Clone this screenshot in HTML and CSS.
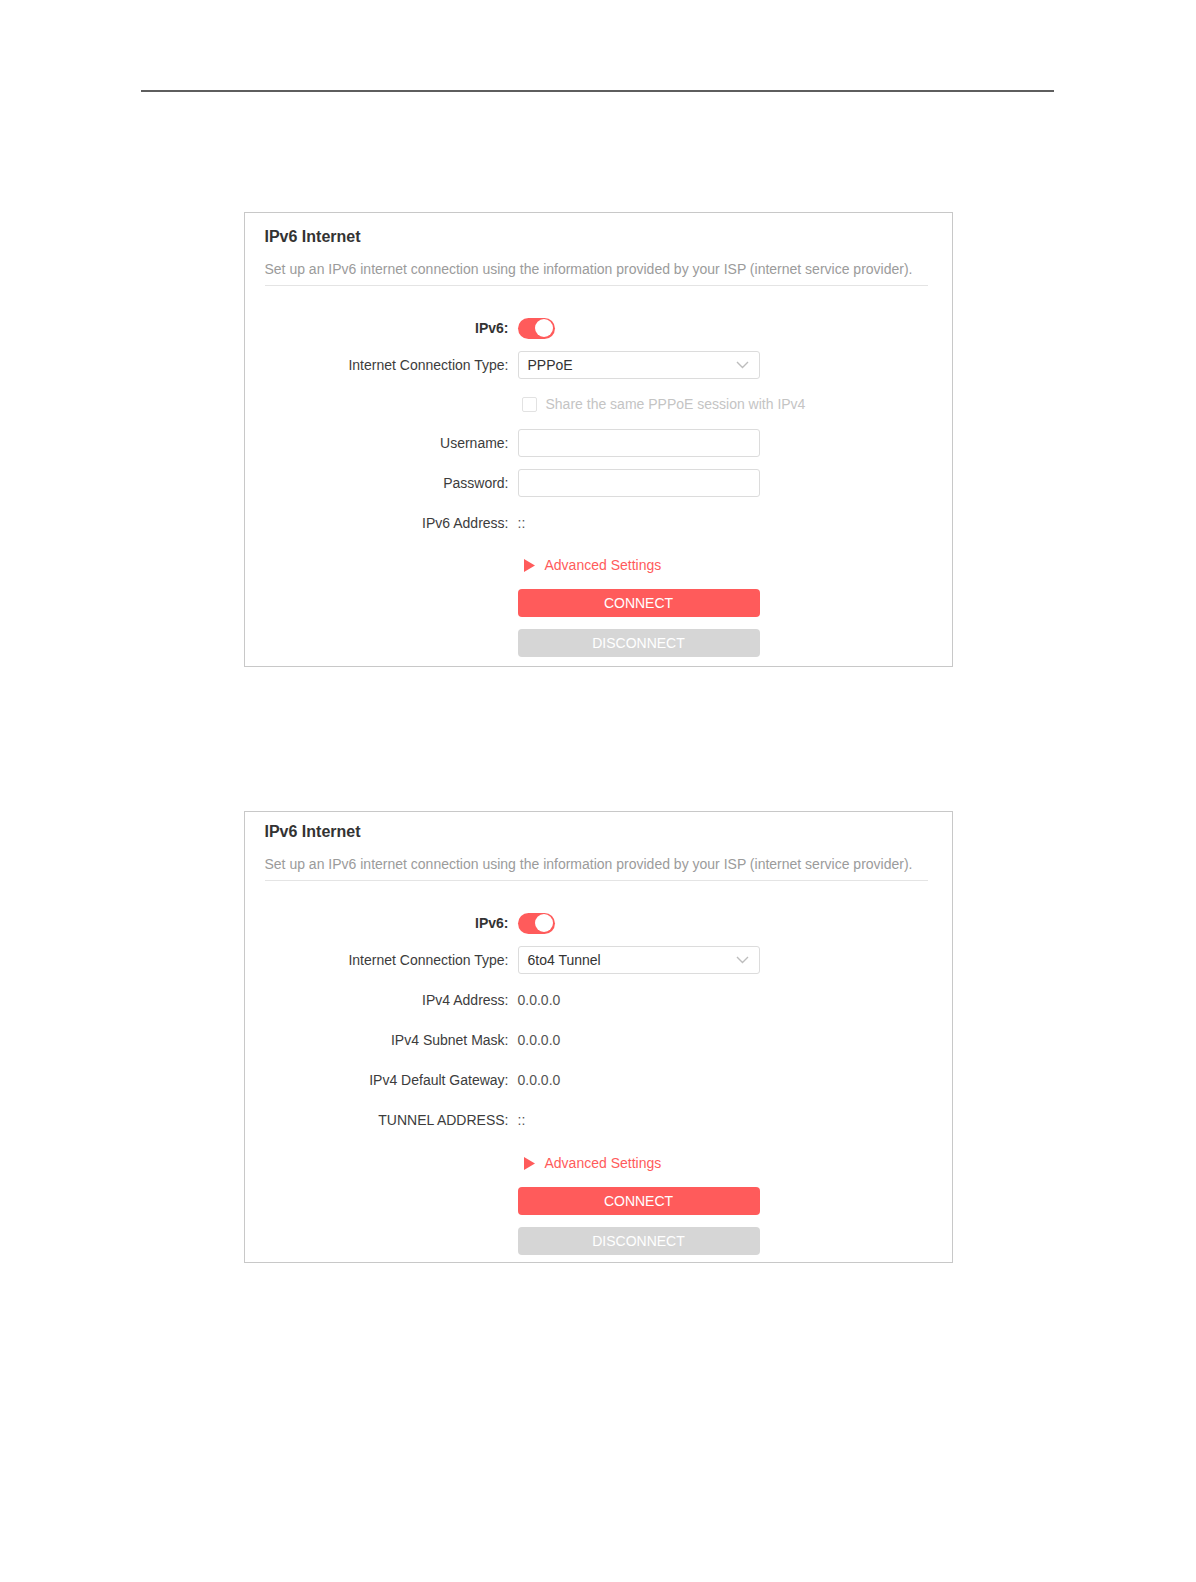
FILE: index.html
```html
<!DOCTYPE html>
<html lang="en">
<head>
<meta charset="utf-8">
<title>IPv6 Internet</title>
<link rel="stylesheet" href="styles.css">
</head>
<body>
<div class="page">
  <div class="rule"></div>

  <section class="panel">
    <h2 class="panel-title">IPv6 Internet</h2>
    <p class="panel-desc">Set up an IPv6 internet connection using the information provided by your ISP (internet service provider).</p>
    <div class="form">
      <div class="row row--switch">
        <span class="label label--strong">IPv6:</span>
        <span class="toggle"></span>
      </div>
      <div class="row">
        <span class="label">Internet Connection Type:</span>
        <div class="select">
          <span>PPPoE</span>
          <svg class="chevron" width="13" height="8" viewBox="0 0 13 8"><polyline points="1,1 6.5,6.5 12,1" fill="none" stroke="#bdbdbd" stroke-width="1.4"/></svg>
        </div>
      </div>
      <div class="row row--check">
        <span class="label"></span>
        <span class="checkbox"></span>
        <span class="check-text">Share the same PPPoE session with IPv4</span>
      </div>
      <div class="row">
        <span class="label">Username:</span>
        <span class="input"></span>
      </div>
      <div class="row">
        <span class="label">Password:</span>
        <span class="input"></span>
      </div>
      <div class="row">
        <span class="label">IPv6 Address:</span>
        <span class="value">::</span>
      </div>
      <div class="row row--adv">
        <span class="label"></span>
        <span class="advanced">
          <svg class="adv-arrow" width="11" height="13" viewBox="0 0 11 13"><polygon points="0,0 11,6.5 0,13" fill="#ff5b5b"/></svg>
          Advanced Settings
        </span>
      </div>
      <div class="row">
        <span class="label"></span>
        <span class="btn btn--primary">CONNECT</span>
      </div>
      <div class="row">
        <span class="label"></span>
        <span class="btn btn--disabled">DISCONNECT</span>
      </div>
    </div>
  </section>

  <section class="panel panel--second">
    <h2 class="panel-title">IPv6 Internet</h2>
    <p class="panel-desc">Set up an IPv6 internet connection using the information provided by your ISP (internet service provider).</p>
    <div class="form">
      <div class="row row--switch">
        <span class="label label--strong">IPv6:</span>
        <span class="toggle"></span>
      </div>
      <div class="row">
        <span class="label">Internet Connection Type:</span>
        <div class="select">
          <span>6to4 Tunnel</span>
          <svg class="chevron" width="13" height="8" viewBox="0 0 13 8"><polyline points="1,1 6.5,6.5 12,1" fill="none" stroke="#bdbdbd" stroke-width="1.4"/></svg>
        </div>
      </div>
      <div class="row">
        <span class="label">IPv4 Address:</span>
        <span class="value">0.0.0.0</span>
      </div>
      <div class="row">
        <span class="label">IPv4 Subnet Mask:</span>
        <span class="value">0.0.0.0</span>
      </div>
      <div class="row">
        <span class="label">IPv4 Default Gateway:</span>
        <span class="value">0.0.0.0</span>
      </div>
      <div class="row">
        <span class="label">TUNNEL ADDRESS:</span>
        <span class="value">::</span>
      </div>
      <div class="row row--adv row--adv-spaced">
        <span class="label"></span>
        <span class="advanced">
          <svg class="adv-arrow" width="11" height="13" viewBox="0 0 11 13"><polygon points="0,0 11,6.5 0,13" fill="#ff5b5b"/></svg>
          Advanced Settings
        </span>
      </div>
      <div class="row">
        <span class="label"></span>
        <span class="btn btn--primary">CONNECT</span>
      </div>
      <div class="row">
        <span class="label"></span>
        <span class="btn btn--disabled">DISCONNECT</span>
      </div>
    </div>
  </section>
</div>
</body>
</html>
```

FILE: styles.css
```css
body {
  margin: 0;
  background: #ffffff;
  font-family: "Liberation Sans", Arial, sans-serif;
  color: #333333;
}

.page {
  padding-top: 90px;
  padding-bottom: 200px;
}

.rule {
  height: 2px;
  background: #5e5e5e;
  margin: 0 142px 0 141px;
}

.panel {
  box-sizing: border-box;
  width: 709px;
  margin: 120px auto 0;
  border: 1px solid #c8c8c8;
  padding: 15px 24px 9px 20px;
}

.panel--second {
  margin-top: 144px;
  padding-top: 11px;
  padding-bottom: 7px;
}

.panel-title {
  margin: 0;
  font-size: 16px;
  line-height: 18px;
  font-weight: bold;
  color: #333333;
}

.panel-desc {
  margin: 15px 0 0;
  padding-bottom: 7px;
  border-bottom: 1px solid #e4e4e4;
  font-size: 14px;
  line-height: 17px;
  color: #9b9b9b;
}

.form {
  display: flex;
  flex-direction: column;
  gap: 12px;
  margin-top: 31px;
}

.row {
  display: flex;
  align-items: center;
  height: 28px;
  font-size: 14px;
}

.row--switch {
  height: 22px;
}

.row--check {
  height: 26px;
}

.row--adv {
  box-sizing: border-box;
  padding-top: 4px;
}

.row--adv-spaced {
  margin-top: 1px;
}

.label {
  flex: 0 0 244px;
  margin-right: 9px;
  text-align: right;
  color: #3c3c3c;
  white-space: nowrap;
}

.label--strong {
  font-weight: bold;
  color: #333333;
}

.toggle {
  position: relative;
  width: 37px;
  height: 21px;
  border-radius: 11px;
  background: #ff5b5b;
}

.toggle::after {
  content: "";
  position: absolute;
  top: 1.5px;
  right: 1.5px;
  width: 18px;
  height: 18px;
  border-radius: 50%;
  background: #ffffff;
}

.select {
  box-sizing: border-box;
  width: 242px;
  height: 28px;
  border: 1px solid #dcdcdc;
  border-radius: 3px;
  display: flex;
  align-items: center;
  justify-content: space-between;
  padding: 0 10px 0 9px;
  color: #333333;
}

.chevron {
  display: block;
}

.checkbox {
  box-sizing: border-box;
  width: 15px;
  height: 15px;
  margin-left: 4px;
  border: 1px solid #e2e2e2;
  border-radius: 2px;
}

.check-text {
  margin-left: 9px;
  color: #c4c4c4;
}

.input {
  box-sizing: border-box;
  width: 242px;
  height: 28px;
  border: 1px solid #dcdcdc;
  border-radius: 3px;
}

.value {
  color: #555555;
}

.advanced {
  display: flex;
  align-items: center;
  color: #ff5b5b;
}

.adv-arrow {
  display: block;
  margin: 0 10px 0 6px;
}

.btn {
  box-sizing: border-box;
  width: 242px;
  height: 28px;
  border-radius: 4px;
  display: flex;
  align-items: center;
  justify-content: center;
  color: #ffffff;
  font-size: 14px;
}

.btn--primary {
  background: #ff5b5b;
}

.btn--disabled {
  background: #d6d6d6;
}
```
